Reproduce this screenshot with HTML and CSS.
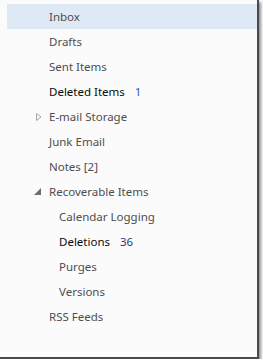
FILE: index.html
```html
<!DOCTYPE html>
<html lang="en">
<head>
    <meta charset="UTF-8" />
    <title>Folders</title>
    <link rel="stylesheet" href="styles.css">
</head>
<body>
    <div class="pane">
        <ul class="folders">
            <li class="folder selected">Inbox</li>
            <li class="folder">Drafts</li>
            <li class="folder">Sent Items</li>
            <li class="folder unread">Deleted Items <span class="count light">1</span></li>
            <li class="folder">
                <svg class="twisty" width="6" height="8" viewBox="0 0 6 8"><path d="M0.5 0.5 L5 4 L0.5 7.5 Z" fill="none" stroke="#a6a6a6"/></svg>
                E-mail Storage
            </li>
            <li class="folder">Junk Email</li>
            <li class="folder">Notes [2]</li>
            <li class="folder">
                <svg class="twisty open" width="7" height="7" viewBox="0 0 7 7"><path d="M7 0 L7 7 L0 7 Z" fill="#6d6d6d"/></svg>
                Recoverable Items
            </li>
            <li class="folder sub">Calendar Logging</li>
            <li class="folder sub unread">Deletions <span class="count">36</span></li>
            <li class="folder sub">Purges</li>
            <li class="folder sub">Versions</li>
            <li class="folder">RSS Feeds</li>
        </ul>
    </div>
</body>
</html>
```

FILE: styles.css
```css
body {
    margin: 0;
    background: #ffffff;
    font-family: 'Noto Sans', 'Open Sans', sans-serif;
}

.pane {
    width: 259px;
    height: 359px;
    background: #fbfbfb;
    border-right: 2px solid #4a4a4a;
    border-bottom: 2px solid #4a4a4a;
    box-sizing: border-box;
    box-shadow: 2px 2px 3px rgba(0, 0, 0, 0.45);
    padding-top: 4px;
}

.folders {
    list-style: none;
    margin: 0;
    padding: 0;
}

.folder {
    position: relative;
    height: 25px;
    line-height: 25px;
    margin-left: 7px;
    padding-left: 42px;
    font-size: 11.5px;
    color: #4d4d4d;
    white-space: nowrap;
}

.folder.selected {
    background: #dfe9f5;
}

.folder.sub {
    padding-left: 52px;
}

.folder.unread {
    color: #0a0a0a;
}

.count {
    margin-left: 7px;
    color: #1c3f78;
}

.count.light {
    color: #2d5fae;
}

.twisty {
    position: absolute;
    left: 29px;
    top: 9px;
}

.twisty.open {
    left: 27px;
    top: 9px;
}
```
